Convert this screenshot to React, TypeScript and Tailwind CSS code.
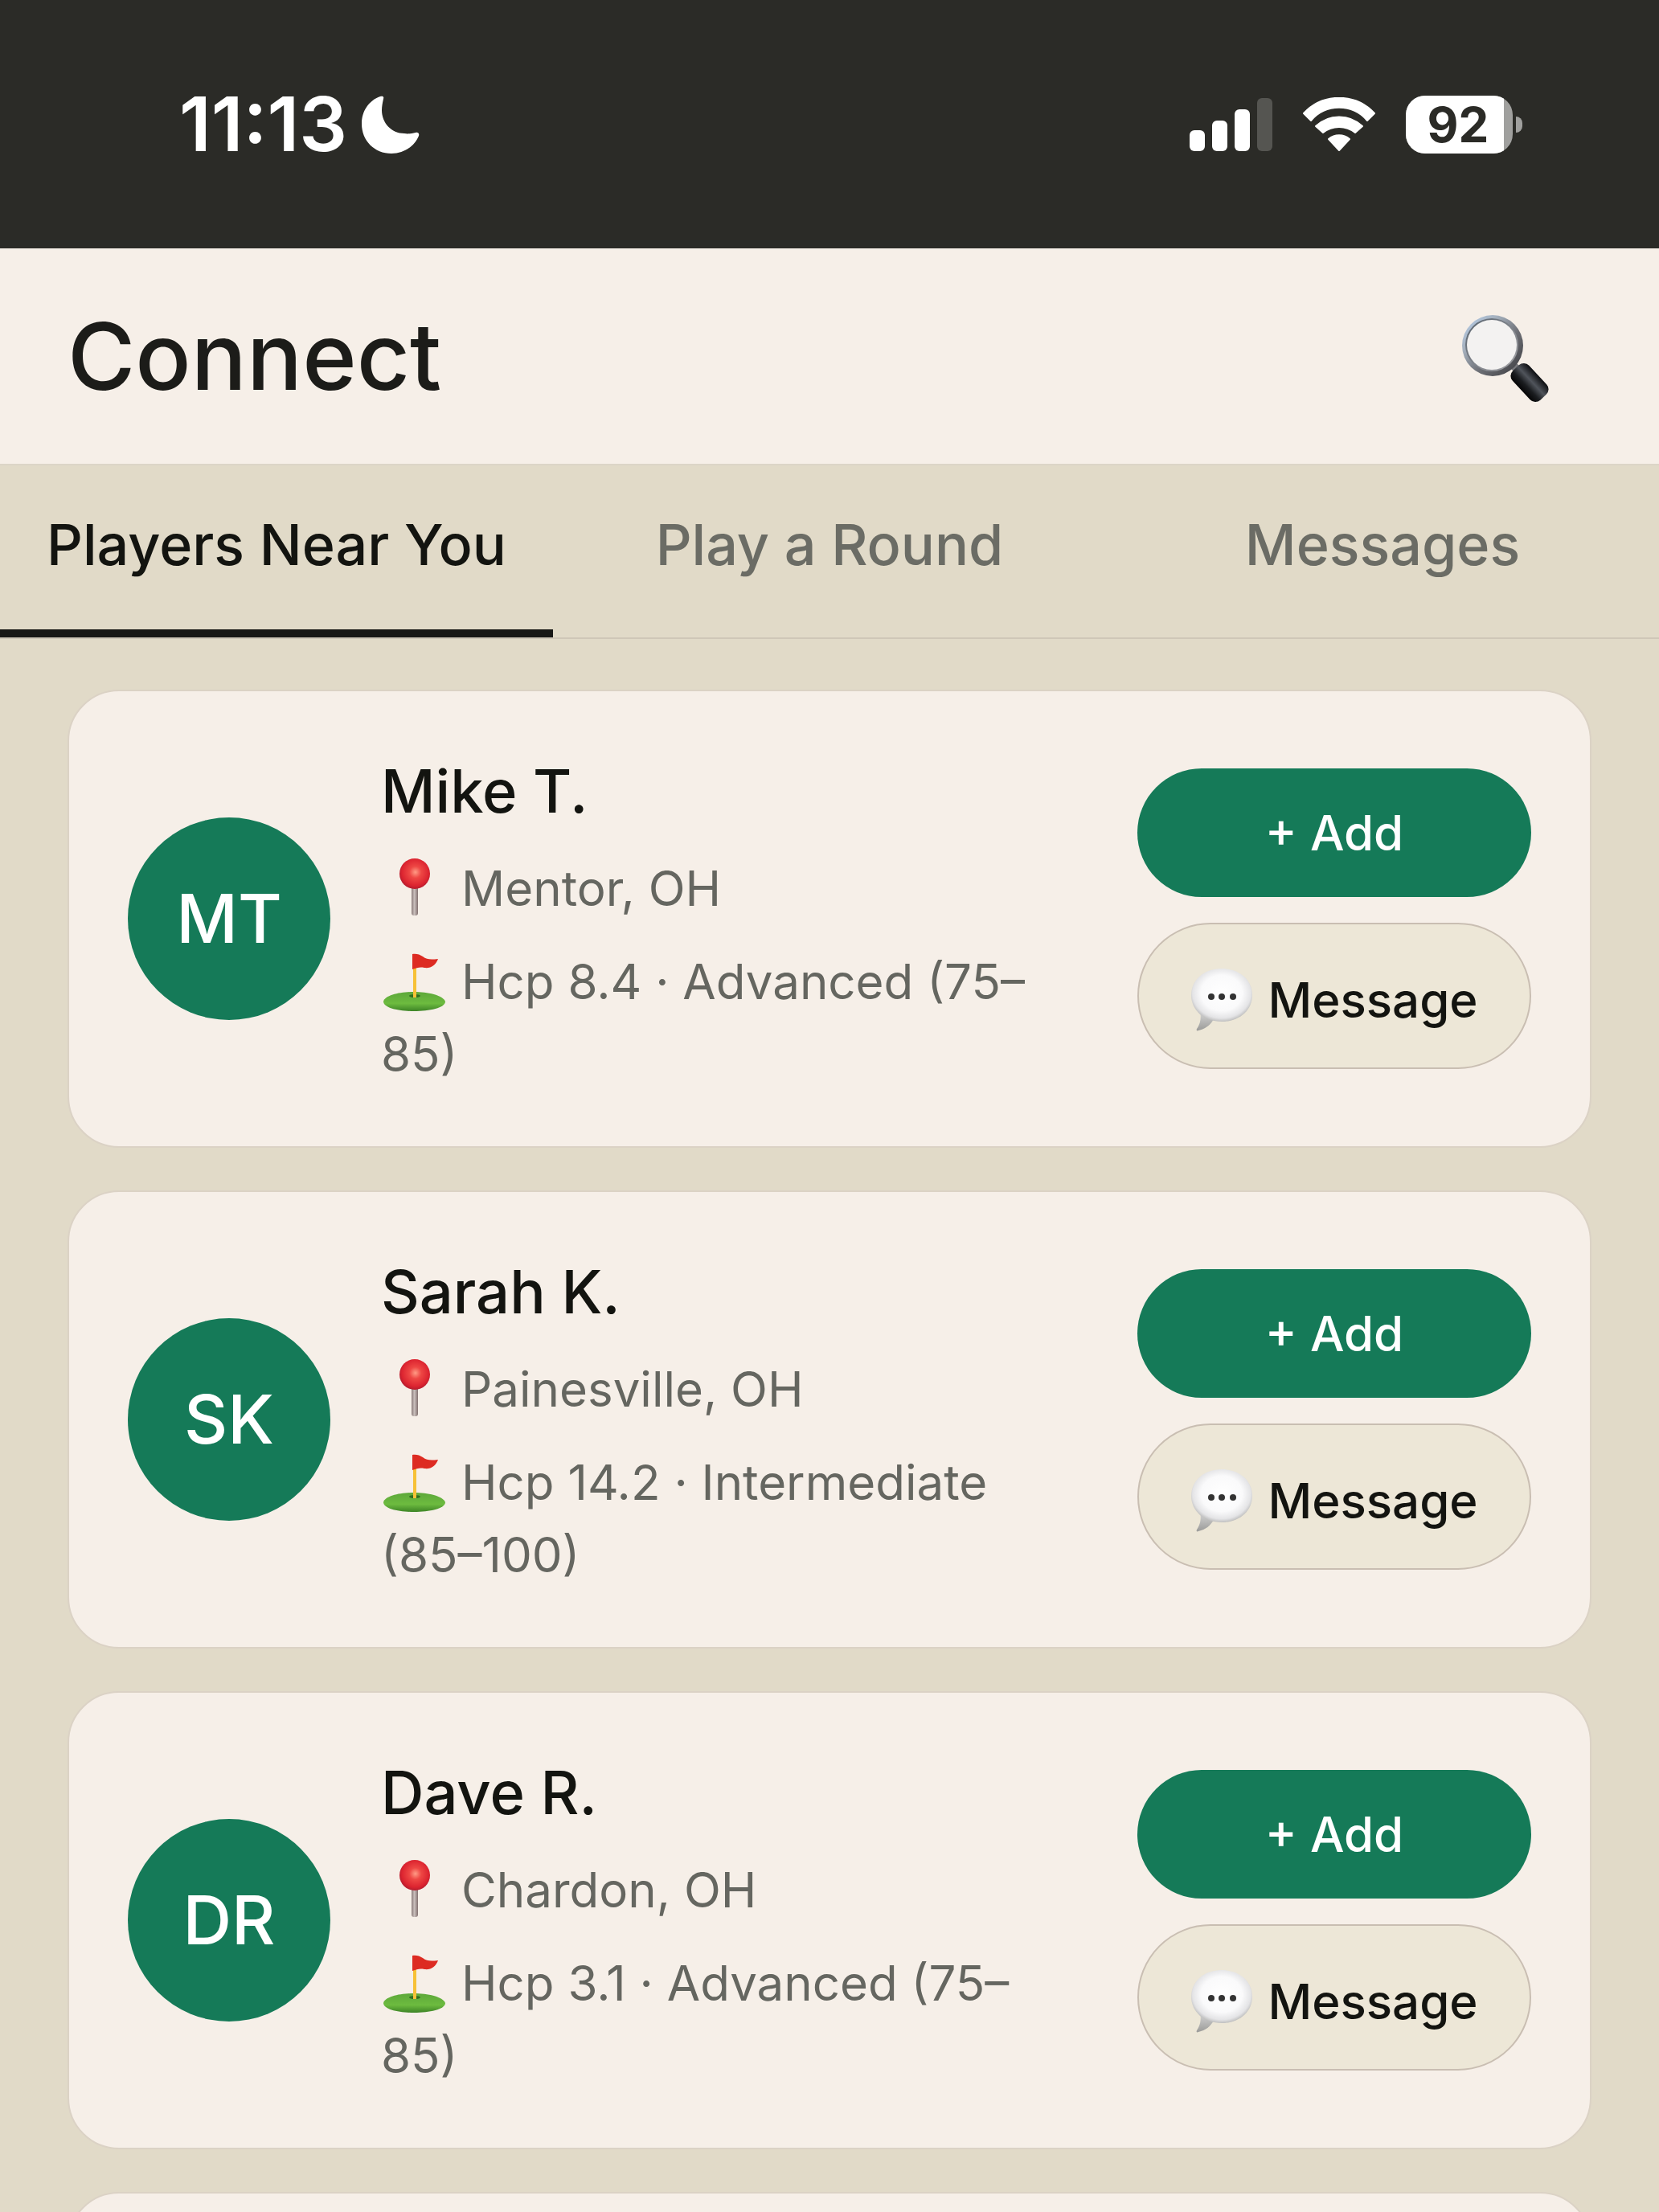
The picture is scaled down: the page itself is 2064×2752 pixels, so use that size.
import React, { useState } from "react";
import clsx from "clsx";

const tabs = ["Players Near You", "Play a Round", "Messages"];

const players = [
  {
    id: 1,
    initials: "MT",
    name: "Mike T.",
    location: "Mentor, OH",
    level: "Hcp 8.4 · Advanced (75–85)",
  },
  {
    id: 2,
    initials: "SK",
    name: "Sarah K.",
    location: "Painesville, OH",
    level: "Hcp 14.2 · Intermediate (85–100)",
  },
  {
    id: 3,
    initials: "DR",
    name: "Dave R.",
    location: "Chardon, OH",
    level: "Hcp 3.1 · Advanced (75–85)",
  },
];

function MoonIcon() {
  return (
    <svg viewBox="0 0 72 72" className="size-18" fill="#fff" aria-hidden="true">
      <path d="M23 1C9 6 0 19 0 35c0 21 16 37 37 37 15 0 29-9 34-22 1-3-1-5-4-4-5 1-9 2-14 1-16 0-28-13-28-29 0-5 1-9 2-14 1-3-1-4-4-3Z" />
    </svg>
  );
}

function SignalIcon() {
  return (
    <svg viewBox="0 0 103 66" className="h-[66px] w-[103px]" fill="#fff" aria-hidden="true">
      <rect x="0" y="40" width="19" height="26" rx="6" />
      <rect x="28" y="28" width="19" height="38" rx="6" />
      <rect x="56" y="14" width="19" height="52" rx="6" />
      <rect x="84" y="0" width="19" height="66" rx="6" fill="#555551" />
    </svg>
  );
}

function WifiIcon() {
  return (
    <svg
      viewBox="0 0 90 68"
      className="h-[68px] w-[90px]"
      fill="#fff"
      stroke="#fff"
      strokeWidth="2"
      strokeLinejoin="round"
      aria-hidden="true"
    >
      <path d="M1 20A60 60 0 0 1 89 20L80 29A46 46 0 0 0 10 29Z" />
      <path d="M16 36A42 42 0 0 1 74 36L65 44A32 32 0 0 0 25 44Z" />
      <path d="M32 52A20 20 0 0 1 58 52L45 66Z" />
    </svg>
  );
}

function Battery() {
  return (
    <div className="flex items-center gap-1">
      <div className="flex h-18 w-[133px] items-center overflow-hidden rounded-3xl bg-[#a0a09e]">
        <span className="flex h-full w-[122px] items-center justify-center bg-white pl-2 text-[60px] font-bold text-[#2b2b27]">
          92
        </span>
      </div>
      <div className="h-5 w-2 rounded-r-full bg-[#a0a09e]" />
    </div>
  );
}

function SearchIcon() {
  return (
    <svg viewBox="0 0 110 112" className="h-28 w-[110px]" aria-hidden="true">
      <defs>
        <linearGradient id="rim" x1="0" y1="0" x2="1" y2="1">
          <stop offset="0" stopColor="#b9d2f0" />
          <stop offset="0.3" stopColor="#a5b0bd" />
          <stop offset="0.6" stopColor="#6c6e74" />
          <stop offset="1" stopColor="#38383c" />
        </linearGradient>
        <linearGradient id="rimInner" x1="0" y1="0" x2="1" y2="1">
          <stop offset="0" stopColor="#59636e" />
          <stop offset="1" stopColor="#a3a3a6" />
        </linearGradient>
        <linearGradient id="handle" x1="0" y1="0" x2="0" y2="1">
          <stop offset="0" stopColor="#0c0d10" />
          <stop offset="0.4" stopColor="#50545b" />
          <stop offset="0.7" stopColor="#1b1d20" />
          <stop offset="1" stopColor="#050506" />
        </linearGradient>
      </defs>
      <path d="M62 62l8 8" stroke="#77777b" strokeWidth="10" />
      <circle cx="39" cy="40" r="38" fill="url(#rim)" />
      <circle cx="38" cy="39" r="33" fill="url(#rimInner)" />
      <circle cx="38" cy="39" r="31" fill="#f3f2f1" />
      <rect x="-25" y="-14" width="50" height="28" rx="9" fill="url(#handle)" transform="translate(85 86) rotate(47)" />
    </svg>
  );
}

function PinIcon() {
  return (
    <svg viewBox="0 0 80 80" className="mr-5 inline size-20 align-[-16px]" aria-hidden="true">
      <defs>
        <radialGradient id="pinHead" cx="0.52" cy="0.45" r="0.55">
          <stop offset="0" stopColor="#ff9b85" />
          <stop offset="0.35" stopColor="#ee4744" />
          <stop offset="0.8" stopColor="#dc2430" />
          <stop offset="1" stopColor="#b51c2e" />
        </radialGradient>
        <linearGradient id="pinStick" x1="0" x2="1">
          <stop offset="0" stopColor="#8b7c7a" />
          <stop offset="0.45" stopColor="#c9bfbc" />
          <stop offset="1" stopColor="#82706f" />
        </linearGradient>
      </defs>
      <rect x="38" y="36" width="8" height="40" rx="3" fill="url(#pinStick)" />
      <circle cx="42" cy="24" r="19" fill="url(#pinHead)" />
    </svg>
  );
}

function FlagIcon() {
  return (
    <svg viewBox="0 0 80 80" className="mr-5 inline size-20 align-[-16px]" aria-hidden="true">
      <defs>
        <linearGradient id="green" x1="0" y1="0" x2="0" y2="1">
          <stop offset="0" stopColor="#5da83a" />
          <stop offset="0.6" stopColor="#6dbb3f" />
          <stop offset="1" stopColor="#3d8426" />
        </linearGradient>
      </defs>
      <path d="M3 67C5 59 24 55 41 55s36 4 39 12c0 8-20 12-39 12S3 75 3 67Z" fill="url(#green)" />
      <ellipse cx="42" cy="60" rx="7" ry="2" fill="#2f6d20" />
      <path d="M40 8h4v54h-4z" fill="#f7c137" />
      <path d="M39 8c4-1 9 0 13 3 5 4 10 4 19 3-3 8-9 12-17 11-6-1-9 0-15 2Z" fill="#dd2b22" />
    </svg>
  );
}

function BubbleIcon() {
  return (
    <svg viewBox="0 0 80 80" className="size-20" aria-hidden="true">
      <defs>
        <radialGradient id="bubble" cx="0.5" cy="0.46" r="0.56">
          <stop offset="0" stopColor="#ffffff" />
          <stop offset="0.6" stopColor="#fafafb" />
          <stop offset="0.85" stopColor="#e4e4e6" />
          <stop offset="1" stopColor="#b4b4b3" />
        </radialGradient>
        <linearGradient id="bubbleTail" x1="0" y1="0" x2="0" y2="1">
          <stop offset="0" stopColor="#d6d6d6" />
          <stop offset="1" stopColor="#9b9b99" />
        </linearGradient>
      </defs>
      <path d="M12 54c2 9 0 16-4 22-1 2 0 3 2 2 9-2 15-7 19-14Z" fill="url(#bubbleTail)" />
      <path d="M39 1C61 1 77 15 77 34S61 67 39 67 1 53 1 34 17 1 39 1Z" fill="url(#bubble)" />
      <circle cx="26" cy="36" r="4" fill="#333" />
      <circle cx="39" cy="36" r="4" fill="#333" />
      <circle cx="53" cy="36" r="4" fill="#333" />
    </svg>
  );
}

function PlayerCard({ player }: { player: (typeof players)[number] }) {
  return (
    <li className="flex items-center gap-[63px] rounded-[64px] border-2 border-[#dbd2c5] bg-[#f6efe8] px-[73px] py-[70px]">
      <div className="flex size-[252px] shrink-0 items-center justify-center rounded-full bg-[#157a58] text-[84px] font-medium text-white">
        {player.initials}
      </div>
      <div className="flex min-w-0 flex-1 flex-col gap-[26px] pt-1 pr-3 text-[60px] leading-[90px] text-[#656660]">
        <h2 className="text-[74px] leading-[100px] font-medium text-[#131410]">
          {player.name}
        </h2>
        <p>
          <PinIcon />
          {player.location}
        </p>
        <p>
          <FlagIcon />
          {player.level}
        </p>
      </div>
      <div className="flex w-[490px] shrink-0 flex-col gap-8 text-[60px] leading-[80px] font-medium">
        <button className="rounded-full bg-[#157a58] py-10 text-white">
          + Add
        </button>
        <button className="flex items-center justify-center gap-4 rounded-full border-2 border-[#c9beb2] bg-[#ede7d7] pt-[54px] pb-11 text-[#131410]">
          <BubbleIcon />
          Message
        </button>
      </div>
    </li>
  );
}

export default function App() {
  const [activeTab, setActiveTab] = useState(tabs[0]);

  return (
    <div className="flex h-screen flex-col overflow-hidden bg-[#e1dac8] font-['Inter',sans-serif] text-[#131410]">
      <div className="flex h-[309px] shrink-0 items-center justify-between bg-[#2b2b27] pr-[170px] pl-[223px]">
        <div className="flex items-center gap-[18px]">
          <span className="text-[94px] font-semibold text-white">11:13</span>
          <MoonIcon />
        </div>
        <div className="flex items-center gap-[38px]">
          <SignalIcon />
          <WifiIcon />
          <Battery />
        </div>
      </div>

      <header className="flex shrink-0 items-center justify-between border-b-2 border-[#dcd5c7] bg-[#f6efe8] pt-[66px] pb-16 pr-[136px] pl-21">
        <h1 className="text-[115px] leading-[138px] font-medium text-[#1c1c19]">
          Connect
        </h1>
        <button aria-label="Search" className="pt-1">
          <SearchIcon />
        </button>
      </header>

      <nav className="grid shrink-0 grid-cols-3 border-b-2 border-[#cfc7b8]">
        {tabs.map((tab) => (
          <button
            key={tab}
            onClick={() => setActiveTab(tab)}
            className={clsx(
              "border-b-10 pt-15 pb-[66px] text-[70px] leading-[78px] font-medium whitespace-nowrap",
              tab === activeTab
                ? "border-[#181816] text-[#131410]"
                : "border-transparent text-[#6b6c65]",
            )}
          >
            {tab}
          </button>
        ))}
      </nav>

      <main className="min-h-0 flex-1 overflow-hidden px-21 pt-[63px]">
        <ul className="flex flex-col gap-[53px]">
          {players.map((player) => (
            <PlayerCard key={player.id} player={player} />
          ))}
          <li className="h-[570px] rounded-[64px] border-2 border-[#dbd2c5] bg-[#f6efe8]" />
        </ul>
      </main>
    </div>
  );
}
